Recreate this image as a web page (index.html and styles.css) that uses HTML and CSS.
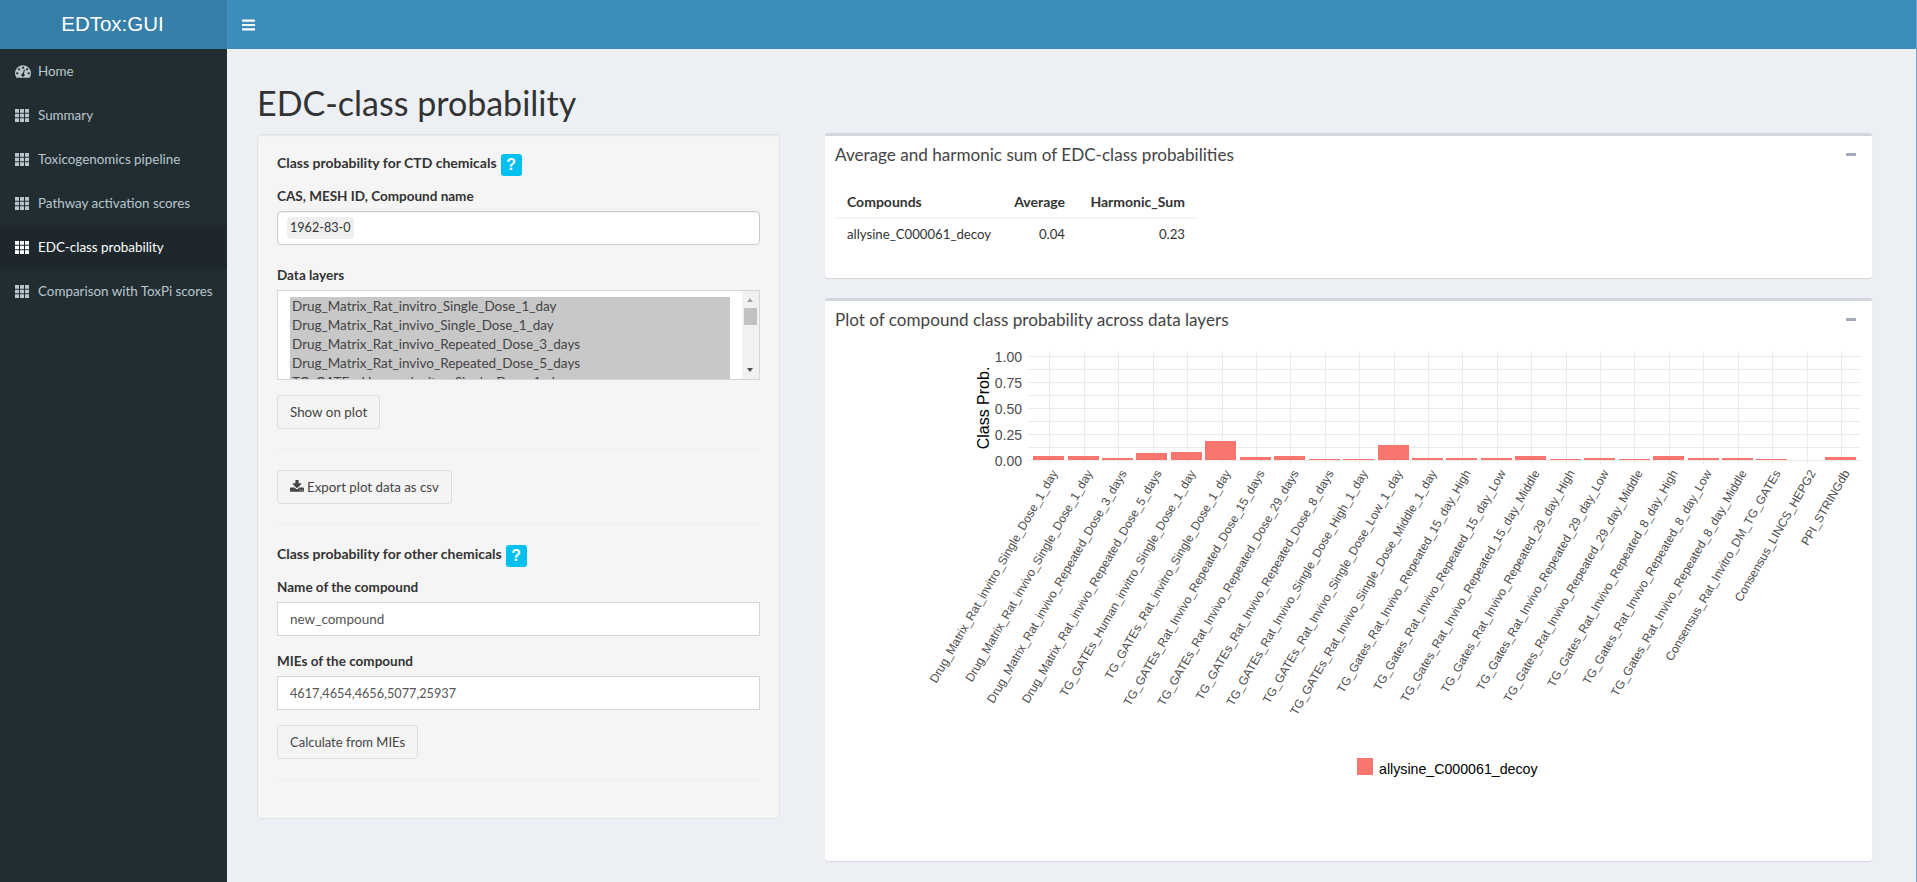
FILE: index.html
```html
<!DOCTYPE html>
<html>
<head>
<meta charset="utf-8"/>
<title>EDTox:GUI</title>
<link rel="stylesheet" href="styles.css">
</head>
<body>
<svg class="icon-defs" width="0" height="0">
  <symbol id="i-th" viewBox="0 0 14 13"><path d="M0 0h4v3.7H0zM5 0h4v3.7H5zM10 0h4v3.7h-4zM0 4.65h4v3.7H0zM5 4.65h4v3.7H5zM10 4.65h4v3.7h-4zM0 9.3h4V13H0zM5 9.3h4V13H5zM10 9.3h4V13h-4z"/></symbol>
  <symbol id="i-dash" viewBox="0 0 1792 1792"><path d="M384 1152q0-53-37.5-90.5t-90.5-37.5-90.5 37.5-37.5 90.5 37.5 90.5 90.5 37.5 90.5-37.5 37.5-90.5zm192-448q0-53-37.5-90.5t-90.5-37.5-90.5 37.5-37.5 90.5 37.5 90.5 90.5 37.5 90.5-37.5 37.5-90.5zm428 481l101-382q6-26-7.5-48.5t-38.5-29.5-48 6.5-30 39.5l-101 382q-60 5-107 43.5t-63 98.5q-20 77 20 146t117 89 146-20 89-117q16-60-6-117t-72-91zm660-33q0-53-37.5-90.5t-90.5-37.5-90.5 37.5-37.5 90.5 37.5 90.5 90.5 37.5 90.5-37.5 37.5-90.5zm-640-640q0-53-37.5-90.5t-90.5-37.5-90.5 37.5-37.5 90.5 37.5 90.5 90.5 37.5 90.5-37.5 37.5-90.5zm448 192q0-53-37.5-90.5t-90.5-37.5-90.5 37.5-37.5 90.5 37.5 90.5 90.5 37.5 90.5-37.5 37.5-90.5zm320 448q0 261-141 483-19 29-54 29h-1402q-35 0-54-29-141-221-141-483 0-182 71-348t191-286 286-191 348-71 348 71 286 191 191 286 71 348z"/></symbol>
</svg>

<header class="main-header">
  <div class="logo">EDTox:GUI</div>
  <nav class="navbar">
    <svg class="bars" viewBox="128 256 1536 1280"><path d="M1664 1344v128q0 26-19 45t-45 19h-1408q-26 0-45-19t-19-45v-128q0-26 19-45t45-19h1408q26 0 45 19t19 45zm0-512v128q0 26-19 45t-45 19h-1408q-26 0-45-19t-19-45v-128q0-26 19-45t45-19h1408q26 0 45 19t19 45zm0-512v128q0 26-19 45t-45 19h-1408q-26 0-45-19t-19-45v-128q0-26 19-45t45-19h1408q26 0 45 19t19 45z"/></svg>
  </nav>
</header>

<div class="wrapper">
  <aside class="sidebar">
    <a class="menu-item"><svg class="menu-icon dash"><use href="#i-dash"/></svg>Home</a>
    <a class="menu-item"><svg class="menu-icon"><use href="#i-th"/></svg>Summary</a>
    <a class="menu-item"><svg class="menu-icon"><use href="#i-th"/></svg>Toxicogenomics pipeline</a>
    <a class="menu-item"><svg class="menu-icon"><use href="#i-th"/></svg>Pathway activation scores</a>
    <a class="menu-item active"><svg class="menu-icon"><use href="#i-th"/></svg>EDC-class probability</a>
    <a class="menu-item"><svg class="menu-icon"><use href="#i-th"/></svg>Comparison with ToxPi scores</a>
  </aside>

  <main class="content">
    <h2 class="page-title">EDC-class probability</h2>
    <div class="columns">
      <section class="well">
        <div class="section-title">Class probability for CTD chemicals <span class="help">?</span></div>
        <label class="field-label">CAS, MESH ID, Compound name</label>
        <div class="selectize"><span class="chip">1962-83-0</span></div>
        <label class="field-label layers">Data layers</label>
        <div class="listbox">
          <div class="options">
            <div>Drug_Matrix_Rat_invitro_Single_Dose_1_day</div>
            <div>Drug_Matrix_Rat_invivo_Single_Dose_1_day</div>
            <div>Drug_Matrix_Rat_invivo_Repeated_Dose_3_days</div>
            <div>Drug_Matrix_Rat_invivo_Repeated_Dose_5_days</div>
            <div>TG_GATEs_Human_invitro_Single_Dose_1_day</div>
          </div>
          <div class="scrollbar">
            <span class="arrow up"></span>
            <span class="thumb"></span>
            <span class="arrow down"></span>
          </div>
        </div>
        <button class="btn show">Show on plot</button>
        <hr>
        <button class="btn export"><svg class="dl" viewBox="0 0 1664 1664"><path transform="translate(0 -128)" d="M1280 1344q0-26-19-45t-45-19-45 19-19 45 19 45 45 19 45-19 19-45zm256 0q0-26-19-45t-45-19-45 19-19 45 19 45 45 19 45-19 19-45zm128-224v320q0 40-28 68t-68 28h-1472q-40 0-68-28t-28-68v-320q0-40 28-68t68-28h465l135 136q58 56 136 56t136-56l136-136h464q40 0 68 28t28 68zm-325-569q17 41-14 70l-448 448q-18 19-45 19t-45-19l-448-448q-31-29-14-70 17-39 59-39h256v-448q0-26 19-45t45-19h256q26 0 45 19t19 45v448h256q42 0 59 39z"/></svg>Export plot data as csv</button>
        <hr>
        <div class="section-title">Class probability for other chemicals <span class="help">?</span></div>
        <label class="field-label">Name of the compound</label>
        <input class="text-input" value="new_compound">
        <label class="field-label mies">MIEs of the compound</label>
        <input class="text-input digits" value="4617,4654,4656,5077,25937">
        <button class="btn calc">Calculate from MIEs</button>
        <hr>
      </section>

      <div class="boxes">
        <section class="box box-table">
          <div class="box-header">
            <h3>Average and harmonic sum of EDC-class probabilities</h3>
            <span class="collapse"></span>
          </div>
          <table class="result">
            <thead>
              <tr><th class="col-name">Compounds</th><th class="num col-avg">Average</th><th class="num col-sum">Harmonic_Sum</th></tr>
            </thead>
            <tbody>
              <tr><td>allysine_C000061_decoy</td><td class="num">0.04</td><td class="num">0.23</td></tr>
            </tbody>
          </table>
        </section>

        <section class="box box-plot">
          <div class="box-header">
            <h3>Plot of compound class probability across data layers</h3>
            <span class="collapse"></span>
          </div>
          <!-- viewBox uses page coordinates so the numbers read straight off the screenshot -->
          <svg class="plot" viewBox="825 342 1047 519" width="1047" height="519">
            <g class="grid">
              <path d="M1028 356.5H1861M1028 369.5H1861M1028 382.5H1861M1028 395.5H1861M1028 408.5H1861M1028 421.5H1861M1028 434.5H1861M1028 447.5H1861M1028 460.5H1861"/>
              <path d="M1049.5 351V464M1084.5 351V464M1118.5 351V464M1153.5 351V464M1187.5 351V464M1222.5 351V464M1256.5 351V464M1290.5 351V464M1325.5 351V464M1359.5 351V464M1394.5 351V464M1428.5 351V464M1462.5 351V464M1497.5 351V464M1531.5 351V464M1566.5 351V464M1600.5 351V464M1634.5 351V464M1669.5 351V464M1703.5 351V464M1738.5 351V464M1772.5 351V464M1807.5 351V464M1841.5 351V464"/>
            </g>
            <g class="bars-g">
              <rect x="1033" y="456" width="31" height="4"/>
              <rect x="1068" y="456" width="31" height="4"/>
              <rect x="1102" y="458" width="31" height="2"/>
              <rect x="1136" y="453" width="31" height="7"/>
              <rect x="1171" y="452" width="31" height="8"/>
              <rect x="1205" y="441" width="31" height="19"/>
              <rect x="1240" y="457" width="31" height="3"/>
              <rect x="1274" y="456" width="31" height="4"/>
              <rect x="1309" y="459" width="31" height="1"/>
              <rect x="1343" y="459" width="31" height="1"/>
              <rect x="1378" y="445" width="31" height="15"/>
              <rect x="1412" y="458" width="31" height="2"/>
              <rect x="1446" y="458" width="31" height="2"/>
              <rect x="1481" y="458" width="31" height="2"/>
              <rect x="1515" y="456" width="31" height="4"/>
              <rect x="1550" y="459" width="31" height="1"/>
              <rect x="1584" y="458" width="31" height="2"/>
              <rect x="1619" y="459" width="31" height="1"/>
              <rect x="1653" y="456" width="31" height="4"/>
              <rect x="1688" y="458" width="31" height="2"/>
              <rect x="1722" y="458" width="31" height="2"/>
              <rect x="1756" y="459" width="31" height="1"/>
              <rect x="1825" y="457" width="31" height="3"/>
            </g>
            <g class="y-ticks">
              <text x="1022" y="362">1.00</text>
              <text x="1022" y="388">0.75</text>
              <text x="1022" y="414">0.50</text>
              <text x="1022" y="440">0.25</text>
              <text x="1022" y="466">0.00</text>
            </g>
            <text class="y-title" transform="rotate(-90 989 408)" x="989" y="408">Class Prob.</text>
            <g class="x-ticks" transform="translate(2 -1)">
              <text transform="rotate(-60 1056 474)" x="1056" y="474">Drug_Matrix_Rat_invitro_Single_Dose_1_day</text>
              <text transform="rotate(-60 1091 474)" x="1091" y="474">Drug_Matrix_Rat_invivo_Single_Dose_1_day</text>
              <text transform="rotate(-60 1125 474)" x="1125" y="474">Drug_Matrix_Rat_invivo_Repeated_Dose_3_days</text>
              <text transform="rotate(-60 1160 474)" x="1160" y="474">Drug_Matrix_Rat_invivo_Repeated_Dose_5_days</text>
              <text transform="rotate(-60 1194 474)" x="1194" y="474">TG_GATEs_Human_invitro_Single_Dose_1_day</text>
              <text transform="rotate(-60 1229 474)" x="1229" y="474">TG_GATEs_Rat_invitro_Single_Dose_1_day</text>
              <text transform="rotate(-60 1263 474)" x="1263" y="474">TG_GATEs_Rat_Invivo_Repeated_Dose_15_days</text>
              <text transform="rotate(-60 1297 474)" x="1297" y="474">TG_GATEs_Rat_Invivo_Repeated_Dose_29_days</text>
              <text transform="rotate(-60 1332 474)" x="1332" y="474">TG_GATEs_Rat_Invivo_Repeated_Dose_8_days</text>
              <text transform="rotate(-60 1366 474)" x="1366" y="474">TG_GATEs_Rat_Invivo_Single_Dose_High_1_day</text>
              <text transform="rotate(-60 1401 474)" x="1401" y="474">TG_GATEs_Rat_Invivo_Single_Dose_Low_1_day</text>
              <text transform="rotate(-60 1435 474)" x="1435" y="474">TG_GATEs_Rat_Invivo_Single_Dose_Middle_1_day</text>
              <text transform="rotate(-60 1469 474)" x="1469" y="474">TG_Gates_Rat_Invivo_Repeated_15_day_High</text>
              <text transform="rotate(-60 1504 474)" x="1504" y="474">TG_Gates_Rat_Invivo_Repeated_15_day_Low</text>
              <text transform="rotate(-60 1538 474)" x="1538" y="474">TG_Gates_Rat_Invivo_Repeated_15_day_Middle</text>
              <text transform="rotate(-60 1573 474)" x="1573" y="474">TG_Gates_Rat_Invivo_Repeated_29_day_High</text>
              <text transform="rotate(-60 1607 474)" x="1607" y="474">TG_Gates_Rat_Invivo_Repeated_29_day_Low</text>
              <text transform="rotate(-60 1641 474)" x="1641" y="474">TG_Gates_Rat_Invivo_Repeated_29_day_Middle</text>
              <text transform="rotate(-60 1676 474)" x="1676" y="474">TG_Gates_Rat_Invivo_Repeated_8_day_High</text>
              <text transform="rotate(-60 1710 474)" x="1710" y="474">TG_Gates_Rat_Invivo_Repeated_8_day_Low</text>
              <text transform="rotate(-60 1745 474)" x="1745" y="474">TG_Gates_Rat_Invivo_Repeated_8_day_Middle</text>
              <text transform="rotate(-60 1779 474)" x="1779" y="474">Consensus_Rat_Invitro_DM_TG_GATEs</text>
              <text transform="rotate(-60 1814 474)" x="1814" y="474">Consensus_LINCS_HEPG2</text>
              <text transform="rotate(-60 1848 474)" x="1848" y="474">PPI_STRINGdb</text>
            </g>
            <rect class="legend-key" x="1357" y="758" width="16" height="17"/>
            <text class="legend-text" x="1379" y="774">allysine_C000061_decoy</text>
          </svg>
        </section>
      </div>
    </div>
  </main>
</div>
</body>
</html>
```

FILE: styles.css
```css
html, body {
  margin: 0;
  height: 100%;
}

body {
  box-sizing: border-box;
  font-family: "Lato", "Noto Sans", sans-serif;
  font-size: 14px;
  color: #333;
  background-color: #ecf0f5;
  border-right: 1px solid #7a9fd4;
  overflow: hidden;
}

.icon-defs {
  position: absolute;
}

/* header */
.main-header {
  display: flex;
  height: 49px;
}

.logo {
  box-sizing: border-box;
  width: 227px;
  padding-right: 2px;
  background-color: #367fa9;
  color: #fff;
  font-family: "Liberation Sans", Arial, sans-serif;
  font-size: 20.5px;
  line-height: 48px;
  text-align: center;
}

.navbar {
  flex: 1;
  display: flex;
  align-items: center;
  padding-left: 15px;
  background-color: #3c8dbc;
}

.bars {
  width: 13px;
  height: 12px;
  fill: #fff;
}

/* sidebar */
.wrapper {
  display: flex;
  height: 833px;
}

.sidebar {
  width: 227px;
  flex: none;
  background-color: #222d32;
}

.menu-item {
  display: flex;
  align-items: center;
  height: 44px;
  padding-left: 15px;
  color: #b8c7ce;
  font-size: 13.4px;
}

.menu-item.active {
  background-color: #1e282c;
  color: #fff;
}

.menu-icon {
  width: 14px;
  height: 13px;
  margin-right: 9px;
  fill: #b8c7ce;
}

.menu-icon.dash {
  width: 16px;
  height: 16px;
  margin-right: 7px;
}

.active .menu-icon {
  fill: #fff;
}

/* content */
.content {
  flex: 1;
  min-width: 0;
  padding: 0 44px 0 30px;
}

.page-title {
  margin: 0;
  padding: 35px 0 0;
  height: 49px;
  font-size: 34px;
  font-weight: 400;
  line-height: 38px;
  color: #333;
}

.columns {
  display: flex;
  align-items: flex-start;
  gap: 45px;
}

.well {
  width: 523px;
  height: 685px;
  box-sizing: border-box;
  margin-top: 1px;
  padding: 0 19px;
  background-color: #f5f5f5;
  border: 1px solid #e3e3e3;
  border-radius: 4px;
  box-shadow: inset 0 1px 1px rgba(0,0,0,.05);
}

.section-title {
  display: flex;
  align-items: flex-start;
  gap: 4px;
  height: 22px;
  margin-top: 19px;
  font-size: 14px;
  font-weight: 700;
  line-height: 18px;
}

.help {
  width: 21px;
  height: 22px;
  border-radius: 3px;
  background-color: #00c0ef;
  color: #fff;
  font-family: "Liberation Sans", Arial, sans-serif;
  font-size: 16px;
  font-weight: 700;
  line-height: 22px;
  text-align: center;
}

.field-label {
  display: block;
  height: 20px;
  line-height: 20px;
  margin: 10px 0 5px;
  font-size: 13.5px;
  font-weight: 700;
}

.field-label.layers {
  margin-top: 20px;
}

.field-label.mies {
  margin-top: 15px;
}

.selectize {
  box-sizing: border-box;
  height: 34px;
  padding: 5px 9px;
  background-color: #fff;
  border: 1px solid #ccc;
  border-radius: 4px;
  box-shadow: inset 0 1px 1px rgba(0,0,0,.075);
}

.chip {
  display: inline-block;
  height: 22px;
  padding: 0 3px;
  background-color: #efefef;
  border-radius: 3px;
  font-size: 12.6px;
  line-height: 22px;
}

.listbox {
  display: flex;
  box-sizing: border-box;
  height: 90px;
  background-color: #fff;
  border: 1px solid #d2d6de;
  overflow: hidden;
}

.options {
  flex: 1;
  padding: 6px 12px;
  font-size: 13.5px;
  line-height: 19px;
  color: #555;
}

.options div {
  padding-left: 2px;
  background-color: #c8c8c8;
  color: #444;
}

.scrollbar {
  position: relative;
  width: 17px;
  background-color: #f1f1f1;
}

.thumb {
  position: absolute;
  top: 17px;
  left: 2px;
  width: 13px;
  height: 17px;
  background-color: #c1c1c1;
}

.arrow {
  position: absolute;
  left: 5px;
  border-left: 3.5px solid transparent;
  border-right: 3.5px solid transparent;
}

.arrow.up {
  top: 7px;
  border-bottom: 4px solid #a3a3a3;
}

.arrow.down {
  bottom: 7px;
  border-top: 4px solid #505050;
}

.btn {
  display: block;
  box-sizing: border-box;
  height: 34px;
  padding: 0 12px;
  background-color: #f4f4f4;
  border: 1px solid #ddd;
  border-radius: 3px;
  color: #444;
  font-family: inherit;
  font-size: 13.4px;
}

.btn.export {
  font-size: 13.3px;
}

.btn.show, .btn.calc {
  margin-top: 15px;
}

.btn.calc {
  font-size: 13px;
}

.dl {
  width: 14px;
  height: 14px;
  margin-right: 3px;
  fill: #444;
  vertical-align: -2px;
}

.well hr {
  margin: 20px 0;
  border: 0;
  border-top: 1px solid #eee;
}

.text-input {
  display: block;
  width: 100%;
  box-sizing: border-box;
  height: 34px;
  padding: 6px 12px;
  background-color: #fff;
  border: 1px solid #d2d6de;
  color: #555;
  font-family: inherit;
  font-size: 13.5px;
}

.text-input.digits {
  font-size: 12.7px;
}

/* boxes */
.boxes {
  flex: 1;
  min-width: 0;
}

.box {
  box-sizing: border-box;
  background-color: #fff;
  border-top: 3px solid #d2d6de;
  border-radius: 3px;
  box-shadow: 0 1px 1px rgba(0,0,0,.1);
}

.box-table {
  height: 145px;
  margin-bottom: 20px;
}

.box-plot {
  height: 563px;
}

.box-header {
  display: flex;
  justify-content: space-between;
  align-items: center;
  height: 41px;
  padding: 0 16px 4px 10px;
  box-sizing: border-box;
}

.box-header h3 {
  margin: 0;
  font-size: 17.1px;
  font-weight: 400;
  color: #444;
}

.collapse {
  width: 10px;
  height: 3px;
  background-color: #a3abbc;
}

.result {
  margin: 10px 0 0 10px;
  table-layout: fixed;
  width: 362px;
  border-collapse: collapse;
  font-size: 13.2px;
}

.result th, .result td {
  box-sizing: border-box;
  padding: 6px 12px;
  text-align: left;
  line-height: 18px;
  white-space: nowrap;
}

.result .col-name {
  width: 162px;
}

.result .col-avg {
  width: 80px;
}

.result .col-sum {
  width: 120px;
}

.result th {
  font-size: 14px;
}

.result thead tr {
  border-bottom: 2px solid #f4f4f4;
}

.result .num {
  text-align: right;
}

/* plot */
.plot {
  display: block;
}

.grid path {
  fill: none;
  stroke: #ebebeb;
  stroke-width: 1;
}

.bars-g rect, .legend-key {
  fill: #f8766d;
}

.plot text {
  font-family: "Liberation Sans", Arial, sans-serif;
}

.y-ticks text {
  font-size: 14px;
  fill: #4d4d4d;
  text-anchor: end;
}

.y-title {
  font-size: 16px;
  fill: #000;
  text-anchor: middle;
}

.x-ticks text {
  font-size: 12px;
  fill: #4d4d4d;
  text-anchor: end;
}

.legend-text {
  font-size: 14.2px;
  fill: #000;
}
```
